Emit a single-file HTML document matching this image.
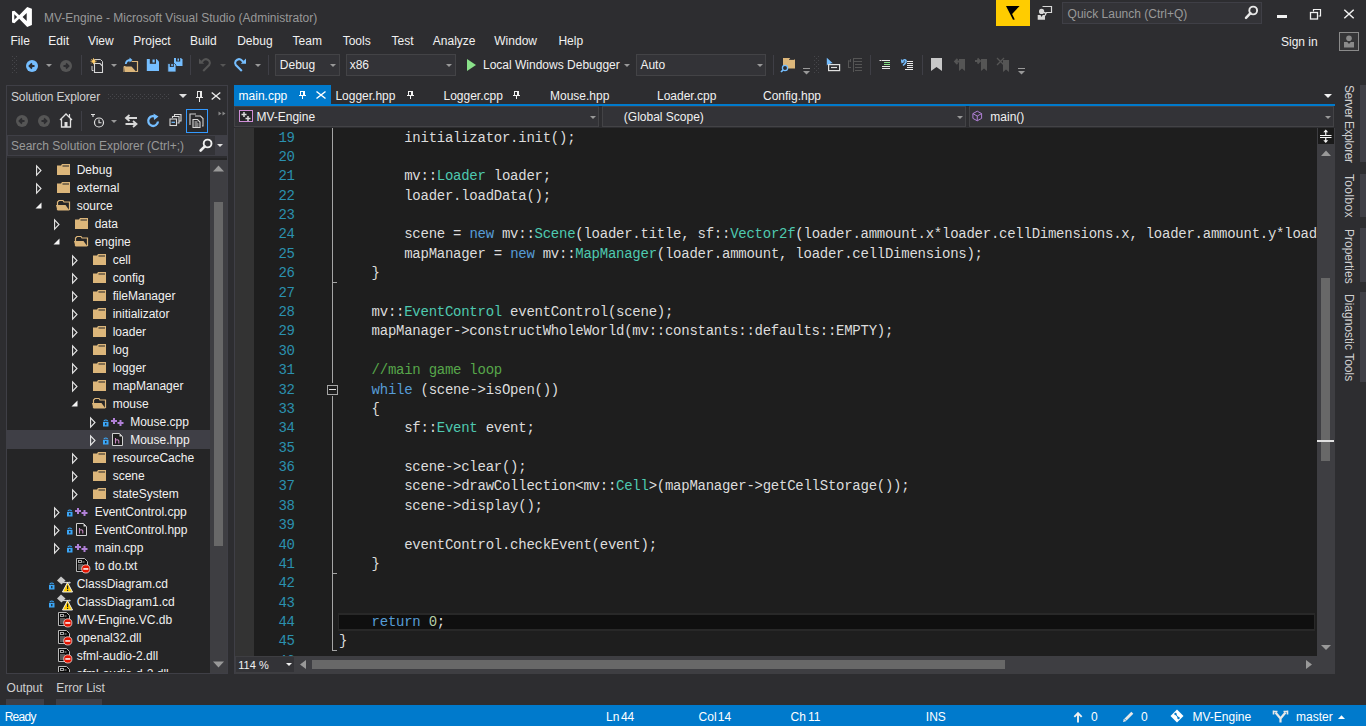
<!DOCTYPE html>
<html><head><meta charset="utf-8"><title>MV-Engine - Microsoft Visual Studio</title>
<style>
html,body{margin:0;padding:0;}
body{width:1366px;height:726px;overflow:hidden;position:relative;background:#2d2d30;font-family:"Liberation Sans", sans-serif;}
.t{position:absolute;white-space:nowrap;line-height:16px;}
.r{position:absolute;}
.s{position:absolute;overflow:visible;}
.code{position:absolute;white-space:pre;font-family:"Liberation Mono", monospace;font-size:14px;letter-spacing:-0.253px;line-height:19.38px;}
</style></head><body>
<svg class="s" style="left:12px;top:7px;" width="20" height="20" viewBox="0 0 20 20"><path fill-rule="evenodd" fill="#fff" d="M0 4.3L2.4 3.8L7.2 8.2L15.2 0L19.9 1.8V18.1L15.2 20L7.2 11.8L2.4 16.2L0 15.6Z M2.3 7.2V12.8L5.1 10Z M14.7 6.1V13.9L10.6 10Z"/></svg>
<div class="t" style="left:44.00px;top:10.24px;font-size:12px;color:#999999;">MV-Engine - Microsoft Visual Studio (Administrator)</div>
<div class="r" style="left:996px;top:0px;width:34px;height:26px;background:#ffcc00;"></div>
<svg class="s" style="left:1005px;top:5px;" width="16" height="16" viewBox="0 0 16 16"><path d="M1 1H14.6L7.1 9L9.8 14.6L8 14.8Z" fill="#000"/></svg>
<svg class="s" style="left:1037px;top:5px;" width="16" height="16" viewBox="0 0 16 16"><path d="M5.5 1.5H14.5V7.5H9.5L8.5 9.5L8 7.5H7" fill="none" stroke="#d8d8d8" stroke-width="1.2"/><circle cx="4.6" cy="6.4" r="2.6" fill="#d8d8d8"/><path d="M0.7 10H3.5L4.6 12L5.7 10H8V14.8H0.7Z" fill="#d8d8d8"/></svg>
<div class="r" style="left:1062px;top:2px;width:200px;height:22px;background:#333337;box-sizing:border-box;border:1px solid #3f3f46;"></div>
<div class="t" style="left:1067.60px;top:6.24px;font-size:12px;color:#999999;">Quick Launch (Ctrl+Q)</div>
<svg class="s" style="left:1244px;top:4px;" width="15" height="16" viewBox="0 0 15 16"><circle cx="9.2" cy="6.5" r="3.9" fill="none" stroke="#e8e8e8" stroke-width="1.9"/><path d="M6.5 9.2L2 13.8" stroke="#e8e8e8" stroke-width="2.5" stroke-linecap="round"/></svg>
<div class="r" style="left:1277px;top:15px;width:10px;height:3px;background:#f1f1f1;"></div>
<svg class="s" style="left:1309px;top:8px;" width="13" height="13" viewBox="0 0 13 13"><path d="M4.5 3.5V1.5H11.5V8H9.5" fill="none" stroke="#f1f1f1" stroke-width="1.2"/><rect x="1.5" y="4.5" width="7" height="6.5" fill="none" stroke="#f1f1f1" stroke-width="1.3"/></svg>
<svg class="s" style="left:1343px;top:9px;" width="12" height="10" viewBox="0 0 12 10"><path d="M1.3 0.8L10.7 9.2M10.7 0.8L1.3 9.2" stroke="#f1f1f1" stroke-width="1.5"/></svg>
<div class="t" style="left:10.50px;top:32.94px;font-size:12px;color:#f1f1f1;">File</div>
<div class="t" style="left:48.30px;top:32.94px;font-size:12px;color:#f1f1f1;">Edit</div>
<div class="t" style="left:87.90px;top:32.94px;font-size:12px;color:#f1f1f1;">View</div>
<div class="t" style="left:133.30px;top:32.94px;font-size:12px;color:#f1f1f1;">Project</div>
<div class="t" style="left:190.00px;top:32.94px;font-size:12px;color:#f1f1f1;">Build</div>
<div class="t" style="left:237.20px;top:32.94px;font-size:12px;color:#f1f1f1;">Debug</div>
<div class="t" style="left:292.60px;top:32.94px;font-size:12px;color:#f1f1f1;">Team</div>
<div class="t" style="left:342.70px;top:32.94px;font-size:12px;color:#f1f1f1;">Tools</div>
<div class="t" style="left:391.50px;top:32.94px;font-size:12px;color:#f1f1f1;">Test</div>
<div class="t" style="left:432.80px;top:32.94px;font-size:12px;color:#f1f1f1;">Analyze</div>
<div class="t" style="left:494.30px;top:32.94px;font-size:12px;color:#f1f1f1;">Window</div>
<div class="t" style="left:558.40px;top:32.94px;font-size:12px;color:#f1f1f1;">Help</div>
<div class="t" style="left:1281.00px;top:33.84px;font-size:12px;color:#f1f1f1;">Sign in</div>
<svg class="s" style="left:1339px;top:32px;" width="20" height="19" viewBox="0 0 20 19"><rect x="0.5" y="0.5" width="19" height="18" fill="#353537" stroke="#8a8a8a" stroke-width="1"/><circle cx="10" cy="6.3" r="2.8" fill="#8a8a8a"/><path d="M5 10H8.3L10 12L11.7 10H15V15.6H5Z" fill="#8a8a8a"/></svg>
<svg class="s" style="left:12px;top:56px;" width="5" height="18" viewBox="0 0 5 18"><rect x="0" y="0" width="1" height="1" fill="#46464a"/><rect x="4" y="0" width="1" height="1" fill="#46464a"/><rect x="0" y="4" width="1" height="1" fill="#46464a"/><rect x="4" y="4" width="1" height="1" fill="#46464a"/><rect x="0" y="8" width="1" height="1" fill="#46464a"/><rect x="4" y="8" width="1" height="1" fill="#46464a"/><rect x="0" y="12" width="1" height="1" fill="#46464a"/><rect x="4" y="12" width="1" height="1" fill="#46464a"/><rect x="0" y="16" width="1" height="1" fill="#46464a"/><rect x="4" y="16" width="1" height="1" fill="#46464a"/><rect x="2" y="2" width="1" height="1" fill="#46464a"/><rect x="2" y="6" width="1" height="1" fill="#46464a"/><rect x="2" y="10" width="1" height="1" fill="#46464a"/><rect x="2" y="14" width="1" height="1" fill="#46464a"/></svg>
<svg class="s" style="left:26px;top:59.5px;" width="12" height="12" viewBox="0 0 12 12"><circle cx="6" cy="6" r="6" fill="#75beff"/><path d="M8.5 6H3.8M6 3.5L3.5 6L6 8.5" stroke="#2d2d30" stroke-width="1.8" fill="none"/></svg>
<svg class="s" style="left:46px;top:64px;" width="6" height="3" viewBox="0 0 6 3"><path d="M0 0H6L3.0 3Z" fill="#999999"/></svg>
<svg class="s" style="left:60px;top:59.5px;" width="12" height="12" viewBox="0 0 12 12"><circle cx="6" cy="6" r="6" fill="#555555"/><path d="M3.5 6H8.2M6 3.5L8.5 6L6 8.5" stroke="#2d2d30" stroke-width="1.8" fill="none"/></svg>
<div class="r" style="left:81px;top:55px;width:1px;height:20px;background:#3f3f46;"></div>
<svg class="s" style="left:89px;top:57px;" width="16" height="16" viewBox="0 0 16 16"><path d="M5.5 5.5V2.5H11.5L13.5 4.5V12" fill="none" stroke="#d0d0d0" stroke-width="1"/><path d="M5.5 6.5H11L13.5 9V15.5H5.5Z" fill="#2d2d30" stroke="#d8d8d8" stroke-width="1.1"/><path d="M3 9V13.5H4.5" fill="none" stroke="#d0d0d0" stroke-width="1"/><circle cx="4.5" cy="4.2" r="1.3" fill="#ffcc66"/><path d="M1.5 4.2H7.5M4.5 1.2V7.2M2.4 2.1L6.6 6.3M6.6 2.1L2.4 6.3" stroke="#ffcc66" stroke-width="0.9"/></svg>
<svg class="s" style="left:111px;top:64px;" width="6" height="3" viewBox="0 0 6 3"><path d="M0 0H6L3.0 3Z" fill="#999999"/></svg>
<svg class="s" style="left:123px;top:57px;" width="16" height="16" viewBox="0 0 16 16"><path d="M8.5 4.5H14.5V14.5H13" fill="none" stroke="#dcb67a" stroke-width="1.2"/><path d="M1 9.5H8.5L13.5 15H2Z" fill="#dcb67a"/><path d="M2.5 9.5L1 9.5V15" fill="none" stroke="#dcb67a" stroke-width="1"/><path d="M2.8 7Q3 3 8 3" fill="none" stroke="#75beff" stroke-width="1.8"/><path d="M6.5 0.5L9.5 3L6.5 5.5Z" fill="#75beff"/></svg>
<svg class="s" style="left:146px;top:58px;" width="14" height="14" viewBox="0 0 14 14"><path d="M0.8 1H10.5L13 3.5V13H0.8Z" fill="#75beff"/><rect x="3.8" y="1" width="6.2" height="4.8" fill="#2d2d30"/><rect x="6.5" y="1.5" width="2.2" height="3" fill="#75beff"/></svg>
<svg class="s" style="left:167px;top:57px;" width="16" height="16" viewBox="0 0 16 16"><path d="M7 1H14L15.5 2.5V9H7Z" fill="#75beff"/><rect x="9" y="1" width="4.2" height="3.5" fill="#2d2d30"/><rect x="10.5" y="1.5" width="1.5" height="2.2" fill="#75beff"/><path d="M0.8 6.5H7.5L9 8V15H0.8Z" fill="#75beff" stroke="#2d2d30" stroke-width="0.8"/><rect x="2.8" y="6.5" width="4" height="3.5" fill="#2d2d30"/><rect x="4.3" y="7" width="1.5" height="2.2" fill="#75beff"/></svg>
<div class="r" style="left:190px;top:55px;width:1px;height:20px;background:#3f3f46;"></div>
<svg class="s" style="left:197px;top:57px;" width="15" height="16" viewBox="0 0 15 16"><path d="M6.2 14L12.2 8Q13.6 6.2 12.4 4.2Q10.2 1.2 7.2 2.6L4.8 4.8" fill="none" stroke="#555" stroke-width="2.1"/><path d="M2 1.4V6.7H7.2Z" fill="#555"/></svg>
<svg class="s" style="left:220px;top:64px;" width="6" height="3" viewBox="0 0 6 3"><path d="M0 0H6L3.0 3Z" fill="#555"/></svg>
<svg class="s" style="left:233px;top:57px;" width="15" height="16" viewBox="0 0 15 16"><path d="M8.8 14L2.8 8Q1.4 6.2 2.6 4.2Q4.8 1.2 7.8 2.6L10.2 4.8" fill="none" stroke="#75beff" stroke-width="2.1"/><path d="M13 1.4V6.7H7.8Z" fill="#75beff"/></svg>
<svg class="s" style="left:255px;top:64px;" width="6" height="3" viewBox="0 0 6 3"><path d="M0 0H6L3.0 3Z" fill="#999999"/></svg>
<div class="r" style="left:268px;top:55px;width:1px;height:20px;background:#3f3f46;"></div>
<div class="r" style="left:275px;top:54px;width:65px;height:22px;background:#333337;box-sizing:border-box;border:1px solid #434346;"></div>
<div class="t" style="left:279.80px;top:57.34px;font-size:12px;color:#f1f1f1;">Debug</div>
<svg class="s" style="left:330px;top:63.5px;" width="6" height="3" viewBox="0 0 6 3"><path d="M0 0H6L3.0 3Z" fill="#999999"/></svg>
<div class="r" style="left:346px;top:54px;width:110px;height:22px;background:#333337;box-sizing:border-box;border:1px solid #434346;"></div>
<div class="t" style="left:349.70px;top:57.34px;font-size:12px;color:#f1f1f1;">x86</div>
<svg class="s" style="left:446px;top:63.5px;" width="6" height="3" viewBox="0 0 6 3"><path d="M0 0H6L3.0 3Z" fill="#999999"/></svg>
<svg class="s" style="left:467px;top:59px;" width="9" height="12" viewBox="0 0 9 12"><path d="M0 0L9 6L0 12Z" fill="#8ae28a"/></svg>
<div class="t" style="left:483.00px;top:57.34px;font-size:12px;color:#f1f1f1;">Local Windows Debugger</div>
<svg class="s" style="left:624px;top:64px;" width="6" height="3" viewBox="0 0 6 3"><path d="M0 0H6L3.0 3Z" fill="#999999"/></svg>
<div class="r" style="left:636px;top:54px;width:130px;height:22px;background:#333337;box-sizing:border-box;border:1px solid #434346;"></div>
<div class="t" style="left:640.40px;top:57.34px;font-size:12px;color:#f1f1f1;">Auto</div>
<svg class="s" style="left:757px;top:63.5px;" width="6" height="3" viewBox="0 0 6 3"><path d="M0 0H6L3.0 3Z" fill="#999999"/></svg>
<div class="r" style="left:773px;top:55px;width:1px;height:20px;background:#3f3f46;"></div>
<svg class="s" style="left:780px;top:57px;" width="16" height="16" viewBox="0 0 16 16"><path d="M3 1H9.5L10.5 2.5H15V11.5H3Z" fill="#dcb67a"/><path d="M9 2.5H14" stroke="#2d2d30" stroke-width="0.8"/><circle cx="5" cy="11" r="2.6" fill="#2d2d30" stroke="#75beff" stroke-width="1.3"/><path d="M3.2 12.8L1 15" stroke="#75beff" stroke-width="1.7"/></svg>
<svg class="s" style="left:803px;top:68px;" width="7" height="7" viewBox="0 0 7 7"><rect x="0" y="0" width="7" height="1" fill="#999"/><path d="M0 3H7L3.5 6.5Z" fill="#999"/></svg>
<svg class="s" style="left:814px;top:56px;" width="5" height="18" viewBox="0 0 5 18"><rect x="0" y="0" width="1" height="1" fill="#46464a"/><rect x="4" y="0" width="1" height="1" fill="#46464a"/><rect x="0" y="4" width="1" height="1" fill="#46464a"/><rect x="4" y="4" width="1" height="1" fill="#46464a"/><rect x="0" y="8" width="1" height="1" fill="#46464a"/><rect x="4" y="8" width="1" height="1" fill="#46464a"/><rect x="0" y="12" width="1" height="1" fill="#46464a"/><rect x="4" y="12" width="1" height="1" fill="#46464a"/><rect x="0" y="16" width="1" height="1" fill="#46464a"/><rect x="4" y="16" width="1" height="1" fill="#46464a"/><rect x="2" y="2" width="1" height="1" fill="#46464a"/><rect x="2" y="6" width="1" height="1" fill="#46464a"/><rect x="2" y="10" width="1" height="1" fill="#46464a"/><rect x="2" y="14" width="1" height="1" fill="#46464a"/></svg>
<svg class="s" style="left:826px;top:57px;" width="15" height="15" viewBox="0 0 15 15"><path d="M0.8 0.8V8.5L2.8 6.8L4.2 9.2L5.5 8.5L4.3 6.2H6.8Z" fill="#75beff"/><rect x="2.6" y="7.6" width="11" height="6" fill="#2d2d30" stroke="#e0e0e0" stroke-width="1.2"/><path d="M5 10.5H11" stroke="#e0e0e0" stroke-width="1.2"/></svg>
<svg class="s" style="left:847px;top:57px;" width="16" height="16" viewBox="0 0 16 16"><g fill="#555"><rect x="1" y="3.5" width="1" height="7"/><rect x="1" y="3.5" width="3" height="1"/><rect x="1" y="10" width="3" height="1"/><rect x="3" y="2" width="1" height="3"/><rect x="6" y="1" width="1" height="14"/><rect x="6" y="1" width="9" height="1"/><rect x="7" y="4" width="8" height="1"/><rect x="8" y="7" width="7" height="1"/><rect x="8" y="10" width="7" height="1"/><rect x="8" y="13" width="7" height="1"/></g></svg>
<div class="r" style="left:870px;top:55px;width:1px;height:20px;background:#3f3f46;"></div>
<svg class="s" style="left:879px;top:59px;" width="12" height="11" viewBox="0 0 12 11"><g fill="#e8e8e8"><rect x="0.5" y="1" width="2" height="1"/><rect x="3" y="1" width="8" height="1"/><rect x="3" y="7" width="8" height="1"/><rect x="3" y="9" width="8" height="1"/></g><g fill="#8ae28a"><rect x="5" y="3" width="6" height="1"/><rect x="5" y="5" width="6" height="1"/></g></svg>
<svg class="s" style="left:900px;top:58px;" width="14" height="13" viewBox="0 0 14 13"><g fill="#e8e8e8"><rect x="7" y="3" width="6" height="1"/><rect x="7" y="5" width="6" height="1"/><rect x="7" y="7" width="6" height="1"/><rect x="7" y="9" width="6" height="1"/><rect x="5" y="11" width="8" height="1"/></g><path d="M1.5 1.5L2 4.5L4.5 3.5" fill="none" stroke="#75beff" stroke-width="1.3"/><path d="M2 4Q3.5 1 5.5 2Q7.5 3.5 3 7.5" fill="none" stroke="#75beff" stroke-width="1.6"/></svg>
<div class="r" style="left:922px;top:55px;width:1px;height:20px;background:#3f3f46;"></div>
<svg class="s" style="left:931px;top:58px;" width="11" height="13" viewBox="0 0 11 13"><path d="M0 0H11V13L5.5 9L0 13Z" fill="#c8c8c8"/></svg>
<svg class="s" style="left:953px;top:57px;" width="14" height="15" viewBox="0 0 14 15"><path d="M6 2H12V14L9 11.5L6 14Z" fill="#555"/><path d="M7 4.5H2M4.5 2L2 4.5L4.5 7" stroke="#555" stroke-width="1.8" fill="none" stroke-linejoin="miter"/></svg>
<svg class="s" style="left:974px;top:57px;" width="14" height="15" viewBox="0 0 14 15"><path d="M7 2H13V14L10 11.5L7 14Z" fill="#555"/><path d="M1 4H6M3.5 1.5L6 4L3.5 6.5" stroke="#555" stroke-width="1.8" fill="none"/></svg>
<svg class="s" style="left:996px;top:57px;" width="14" height="15" viewBox="0 0 14 15"><path d="M7 3H13V15L10 12.5L7 15Z" fill="#555"/><path d="M1 1L8 8M8 1L1 8" stroke="#555" stroke-width="1.3" fill="none"/></svg>
<svg class="s" style="left:1018px;top:68px;" width="7" height="7" viewBox="0 0 7 7"><rect x="0" y="0" width="7" height="1" fill="#999"/><path d="M0 3H7L3.5 6.5Z" fill="#999"/></svg>
<div class="r" style="left:6px;top:85px;width:222px;height:589px;background:#2d2d30;box-sizing:border-box;border:1px solid #3f3f46;"></div>
<div class="t" style="left:11.00px;top:88.54px;font-size:12px;color:#d0d0d0;letter-spacing:-0.14px;">Solution Explorer</div>
<svg class="s" style="left:108px;top:94px;" width="62" height="5" viewBox="0 0 62 5"><rect x="0" y="0" width="1" height="1" fill="#46464a"/><rect x="0" y="4" width="1" height="1" fill="#46464a"/><rect x="4" y="0" width="1" height="1" fill="#46464a"/><rect x="4" y="4" width="1" height="1" fill="#46464a"/><rect x="8" y="0" width="1" height="1" fill="#46464a"/><rect x="8" y="4" width="1" height="1" fill="#46464a"/><rect x="12" y="0" width="1" height="1" fill="#46464a"/><rect x="12" y="4" width="1" height="1" fill="#46464a"/><rect x="16" y="0" width="1" height="1" fill="#46464a"/><rect x="16" y="4" width="1" height="1" fill="#46464a"/><rect x="20" y="0" width="1" height="1" fill="#46464a"/><rect x="20" y="4" width="1" height="1" fill="#46464a"/><rect x="24" y="0" width="1" height="1" fill="#46464a"/><rect x="24" y="4" width="1" height="1" fill="#46464a"/><rect x="28" y="0" width="1" height="1" fill="#46464a"/><rect x="28" y="4" width="1" height="1" fill="#46464a"/><rect x="32" y="0" width="1" height="1" fill="#46464a"/><rect x="32" y="4" width="1" height="1" fill="#46464a"/><rect x="36" y="0" width="1" height="1" fill="#46464a"/><rect x="36" y="4" width="1" height="1" fill="#46464a"/><rect x="40" y="0" width="1" height="1" fill="#46464a"/><rect x="40" y="4" width="1" height="1" fill="#46464a"/><rect x="44" y="0" width="1" height="1" fill="#46464a"/><rect x="44" y="4" width="1" height="1" fill="#46464a"/><rect x="48" y="0" width="1" height="1" fill="#46464a"/><rect x="48" y="4" width="1" height="1" fill="#46464a"/><rect x="52" y="0" width="1" height="1" fill="#46464a"/><rect x="52" y="4" width="1" height="1" fill="#46464a"/><rect x="56" y="0" width="1" height="1" fill="#46464a"/><rect x="56" y="4" width="1" height="1" fill="#46464a"/><rect x="60" y="0" width="1" height="1" fill="#46464a"/><rect x="60" y="4" width="1" height="1" fill="#46464a"/><rect x="2" y="2" width="1" height="1" fill="#46464a"/><rect x="6" y="2" width="1" height="1" fill="#46464a"/><rect x="10" y="2" width="1" height="1" fill="#46464a"/><rect x="14" y="2" width="1" height="1" fill="#46464a"/><rect x="18" y="2" width="1" height="1" fill="#46464a"/><rect x="22" y="2" width="1" height="1" fill="#46464a"/><rect x="26" y="2" width="1" height="1" fill="#46464a"/><rect x="30" y="2" width="1" height="1" fill="#46464a"/><rect x="34" y="2" width="1" height="1" fill="#46464a"/><rect x="38" y="2" width="1" height="1" fill="#46464a"/><rect x="42" y="2" width="1" height="1" fill="#46464a"/><rect x="46" y="2" width="1" height="1" fill="#46464a"/><rect x="50" y="2" width="1" height="1" fill="#46464a"/><rect x="54" y="2" width="1" height="1" fill="#46464a"/><rect x="58" y="2" width="1" height="1" fill="#46464a"/></svg>
<svg class="s" style="left:179px;top:94px;" width="8" height="4" viewBox="0 0 8 4"><path d="M0 0H8L4 4Z" fill="#e0e0e0"/></svg>
<svg class="s" style="left:196px;top:91px;" width="8" height="11" viewBox="0 0 8 11"><g fill="#e8e8e8"><rect x="1" y="0" width="5" height="1"/><rect x="1" y="0" width="1" height="6"/><rect x="4" y="0" width="2" height="6"/><rect x="0" y="6" width="7" height="1"/><rect x="3" y="7" width="1" height="4"/></g></svg>
<svg class="s" style="left:211px;top:92px;" width="10" height="8" viewBox="0 0 10 8"><path d="M0.7 0.5L9.3 7.5M9.3 0.5L0.7 7.5" stroke="#e8e8e8" stroke-width="1.4"/></svg>
<svg class="s" style="left:16px;top:115px;" width="12" height="12" viewBox="0 0 12 12"><circle cx="6" cy="6" r="6" fill="#555555"/><path d="M8.5 6H3.8M6 3.5L3.5 6L6 8.5" stroke="#2d2d30" stroke-width="1.8" fill="none"/></svg>
<svg class="s" style="left:38px;top:115px;" width="12" height="12" viewBox="0 0 12 12"><circle cx="6" cy="6" r="6" fill="#555555"/><path d="M3.5 6H8.2M6 3.5L8.5 6L6 8.5" stroke="#2d2d30" stroke-width="1.8" fill="none"/></svg>
<svg class="s" style="left:59px;top:113px;" width="14" height="15" viewBox="0 0 14 15"><path d="M1 7L7 1L13 7" fill="none" stroke="#e0e0e0" stroke-width="1.3"/><path d="M2.5 6V14H11.5V6" fill="none" stroke="#e0e0e0" stroke-width="1.3"/><rect x="5.5" y="9" width="3" height="5" fill="#e0e0e0"/><path d="M10.5 1V4" stroke="#e0e0e0" stroke-width="1.2"/></svg>
<div class="r" style="left:81px;top:111px;width:1px;height:20px;background:#3f3f46;"></div>
<svg class="s" style="left:91px;top:114px;" width="14" height="14" viewBox="0 0 14 14"><path d="M0 0.5H4M2 0.5V3" stroke="#e0e0e0" stroke-width="1.2"/><circle cx="8" cy="8.5" r="4.5" fill="none" stroke="#e0e0e0" stroke-width="1.2"/><path d="M8 5.5V8.8H10.5" stroke="#e0e0e0" stroke-width="1.1" fill="none"/></svg>
<svg class="s" style="left:111px;top:120px;" width="6" height="3" viewBox="0 0 6 3"><path d="M0 0H6L3.0 3Z" fill="#999999"/></svg>
<svg class="s" style="left:124px;top:114px;" width="14" height="13" viewBox="0 0 14 13"><path d="M13 4H2.5M5.5 1L2 4L5.5 7M1.5 10H12M9 7L12.5 10L9 13" stroke="#d8d8d8" stroke-width="1.8" fill="none"/></svg>
<svg class="s" style="left:147px;top:113px;" width="13" height="15" viewBox="0 0 13 15"><path d="M9.6 4.6A4.9 4.9 0 1 0 11 8.5" fill="none" stroke="#75beff" stroke-width="2.3"/><path d="M6.5 0.5L11.5 3.5L7 7Z" fill="#75beff"/></svg>
<svg class="s" style="left:169px;top:114px;" width="13" height="13" viewBox="0 0 13 13"><rect x="1" y="5" width="6.5" height="6.5" fill="none" stroke="#d8d8d8" stroke-width="1.1"/><path d="M3.5 4V2.5H10V9H8.5M5.5 2V0.5H12V7H10.5" fill="none" stroke="#d8d8d8" stroke-width="1.1"/><path d="M2.5 8.3H6" stroke="#75beff" stroke-width="1.2"/></svg>
<div class="r" style="left:186px;top:109px;width:22px;height:24px;background:#29292b;box-sizing:border-box;border:1px solid #3399ff;"></div>
<svg class="s" style="left:189px;top:113px;" width="16" height="16" viewBox="0 0 16 16"><path d="M1.5 11.5H1V1H7" fill="none" stroke="#d0d0d0" stroke-width="1.1"/><path d="M6 3H11.5L14 5.5V13H13" fill="none" stroke="#d0d0d0" stroke-width="1.1"/><path d="M4 6.5H8.5L11 9V14.5H4Z" fill="#29292b" stroke="#d8d8d8" stroke-width="1.1"/><path d="M5.5 9H8.5M5.5 11H9.5M5.5 13H9.5" stroke="#d8d8d8" stroke-width="1"/></svg>
<svg class="s" style="left:218px;top:111px;" width="8" height="5" viewBox="0 0 8 5"><path d="M0.5 0.5L3.5 2.5L0.5 4.5ZM4.5 0.5L7.5 2.5L4.5 4.5Z" fill="#888"/></svg>
<div class="r" style="left:7px;top:135px;width:220px;height:21px;background:#333337;box-sizing:border-box;border:1px solid #3f3f46;"></div>
<div class="r" style="left:215px;top:136px;width:12px;height:19px;background:#3f3f46;"></div>
<div class="t" style="left:11.00px;top:137.84px;font-size:12px;color:#999999;">Search Solution Explorer (Ctrl+;)</div>
<svg class="s" style="left:199px;top:138px;" width="14" height="14" viewBox="0 0 14 14"><circle cx="8.6" cy="5.5" r="3.9" fill="none" stroke="#f0f0f0" stroke-width="1.9"/><path d="M5.8 8.3L1.6 12.5" stroke="#f0f0f0" stroke-width="2.6" stroke-linecap="round"/></svg>
<svg class="s" style="left:217px;top:144px;" width="6" height="3" viewBox="0 0 6 3"><path d="M0 0H6L3 3Z" fill="#e0e0e0"/></svg>
<div class="r" style="left:7px;top:158px;width:220px;height:515px;background:#252526;"></div>
<div class="r" style="left:7px;top:158px;width:203px;height:514px;overflow:hidden">
<svg class="s" style="left:29px;top:6.599999999999994px" width="6" height="11" viewBox="0 0 6 11"><path d="M0.6 0.8L5 5.5L0.6 10.2Z" fill="none" stroke="#e8e8e8" stroke-width="1.1"/></svg>
<svg class="s" style="left:50px;top:6.400000000000006px" width="13" height="11" viewBox="0 0 13 11"><path d="M0 1.5H4L5 0H13V11H0Z" fill="#dcb67a"/><path d="M5.5 2H12" stroke="#252526" stroke-width="1"/></svg>
<div class="t" style="left:69.70px;top:3.74px;font-size:12px;color:#f1f1f1">Debug</div>
<svg class="s" style="left:29px;top:24.599999999999994px" width="6" height="11" viewBox="0 0 6 11"><path d="M0.6 0.8L5 5.5L0.6 10.2Z" fill="none" stroke="#e8e8e8" stroke-width="1.1"/></svg>
<svg class="s" style="left:50px;top:24.400000000000006px" width="13" height="11" viewBox="0 0 13 11"><path d="M0 1.5H4L5 0H13V11H0Z" fill="#dcb67a"/><path d="M5.5 2H12" stroke="#252526" stroke-width="1"/></svg>
<div class="t" style="left:69.70px;top:21.74px;font-size:12px;color:#f1f1f1">external</div>
<svg class="s" style="left:28px;top:44.400000000000006px" width="7" height="7" viewBox="0 0 7 7"><path d="M6.5 0.5V6.5H0.5Z" fill="#f4f4f4"/></svg>
<svg class="s" style="left:49px;top:41.400000000000006px" width="15" height="12" viewBox="0 0 15 12"><path d="M1.5 11V3L3 1.5H7L8 3H13.5V11" fill="none" stroke="#dcb67a" stroke-width="1.2"/><path d="M0 6H9.5L13.5 11.5H1.5Z" fill="#dcb67a"/></svg>
<div class="t" style="left:69.70px;top:39.74px;font-size:12px;color:#f1f1f1">source</div>
<svg class="s" style="left:47px;top:60.599999999999994px" width="6" height="11" viewBox="0 0 6 11"><path d="M0.6 0.8L5 5.5L0.6 10.2Z" fill="none" stroke="#e8e8e8" stroke-width="1.1"/></svg>
<svg class="s" style="left:68px;top:60.400000000000006px" width="13" height="11" viewBox="0 0 13 11"><path d="M0 1.5H4L5 0H13V11H0Z" fill="#dcb67a"/><path d="M5.5 2H12" stroke="#252526" stroke-width="1"/></svg>
<div class="t" style="left:87.70px;top:57.74px;font-size:12px;color:#f1f1f1">data</div>
<svg class="s" style="left:46px;top:80.4px" width="7" height="7" viewBox="0 0 7 7"><path d="M6.5 0.5V6.5H0.5Z" fill="#f4f4f4"/></svg>
<svg class="s" style="left:67px;top:77.4px" width="15" height="12" viewBox="0 0 15 12"><path d="M1.5 11V3L3 1.5H7L8 3H13.5V11" fill="none" stroke="#dcb67a" stroke-width="1.2"/><path d="M0 6H9.5L13.5 11.5H1.5Z" fill="#dcb67a"/></svg>
<div class="t" style="left:87.70px;top:75.74px;font-size:12px;color:#f1f1f1">engine</div>
<svg class="s" style="left:65px;top:96.59999999999997px" width="6" height="11" viewBox="0 0 6 11"><path d="M0.6 0.8L5 5.5L0.6 10.2Z" fill="none" stroke="#e8e8e8" stroke-width="1.1"/></svg>
<svg class="s" style="left:86px;top:96.39999999999998px" width="13" height="11" viewBox="0 0 13 11"><path d="M0 1.5H4L5 0H13V11H0Z" fill="#dcb67a"/><path d="M5.5 2H12" stroke="#252526" stroke-width="1"/></svg>
<div class="t" style="left:105.70px;top:93.74px;font-size:12px;color:#f1f1f1">cell</div>
<svg class="s" style="left:65px;top:114.59999999999997px" width="6" height="11" viewBox="0 0 6 11"><path d="M0.6 0.8L5 5.5L0.6 10.2Z" fill="none" stroke="#e8e8e8" stroke-width="1.1"/></svg>
<svg class="s" style="left:86px;top:114.39999999999998px" width="13" height="11" viewBox="0 0 13 11"><path d="M0 1.5H4L5 0H13V11H0Z" fill="#dcb67a"/><path d="M5.5 2H12" stroke="#252526" stroke-width="1"/></svg>
<div class="t" style="left:105.70px;top:111.74px;font-size:12px;color:#f1f1f1">config</div>
<svg class="s" style="left:65px;top:132.59999999999997px" width="6" height="11" viewBox="0 0 6 11"><path d="M0.6 0.8L5 5.5L0.6 10.2Z" fill="none" stroke="#e8e8e8" stroke-width="1.1"/></svg>
<svg class="s" style="left:86px;top:132.39999999999998px" width="13" height="11" viewBox="0 0 13 11"><path d="M0 1.5H4L5 0H13V11H0Z" fill="#dcb67a"/><path d="M5.5 2H12" stroke="#252526" stroke-width="1"/></svg>
<div class="t" style="left:105.70px;top:129.74px;font-size:12px;color:#f1f1f1">fileManager</div>
<svg class="s" style="left:65px;top:150.59999999999997px" width="6" height="11" viewBox="0 0 6 11"><path d="M0.6 0.8L5 5.5L0.6 10.2Z" fill="none" stroke="#e8e8e8" stroke-width="1.1"/></svg>
<svg class="s" style="left:86px;top:150.39999999999998px" width="13" height="11" viewBox="0 0 13 11"><path d="M0 1.5H4L5 0H13V11H0Z" fill="#dcb67a"/><path d="M5.5 2H12" stroke="#252526" stroke-width="1"/></svg>
<div class="t" style="left:105.70px;top:147.74px;font-size:12px;color:#f1f1f1">initializator</div>
<svg class="s" style="left:65px;top:168.59999999999997px" width="6" height="11" viewBox="0 0 6 11"><path d="M0.6 0.8L5 5.5L0.6 10.2Z" fill="none" stroke="#e8e8e8" stroke-width="1.1"/></svg>
<svg class="s" style="left:86px;top:168.39999999999998px" width="13" height="11" viewBox="0 0 13 11"><path d="M0 1.5H4L5 0H13V11H0Z" fill="#dcb67a"/><path d="M5.5 2H12" stroke="#252526" stroke-width="1"/></svg>
<div class="t" style="left:105.70px;top:165.74px;font-size:12px;color:#f1f1f1">loader</div>
<svg class="s" style="left:65px;top:186.59999999999997px" width="6" height="11" viewBox="0 0 6 11"><path d="M0.6 0.8L5 5.5L0.6 10.2Z" fill="none" stroke="#e8e8e8" stroke-width="1.1"/></svg>
<svg class="s" style="left:86px;top:186.39999999999998px" width="13" height="11" viewBox="0 0 13 11"><path d="M0 1.5H4L5 0H13V11H0Z" fill="#dcb67a"/><path d="M5.5 2H12" stroke="#252526" stroke-width="1"/></svg>
<div class="t" style="left:105.70px;top:183.74px;font-size:12px;color:#f1f1f1">log</div>
<svg class="s" style="left:65px;top:204.59999999999997px" width="6" height="11" viewBox="0 0 6 11"><path d="M0.6 0.8L5 5.5L0.6 10.2Z" fill="none" stroke="#e8e8e8" stroke-width="1.1"/></svg>
<svg class="s" style="left:86px;top:204.39999999999998px" width="13" height="11" viewBox="0 0 13 11"><path d="M0 1.5H4L5 0H13V11H0Z" fill="#dcb67a"/><path d="M5.5 2H12" stroke="#252526" stroke-width="1"/></svg>
<div class="t" style="left:105.70px;top:201.74px;font-size:12px;color:#f1f1f1">logger</div>
<svg class="s" style="left:65px;top:222.59999999999997px" width="6" height="11" viewBox="0 0 6 11"><path d="M0.6 0.8L5 5.5L0.6 10.2Z" fill="none" stroke="#e8e8e8" stroke-width="1.1"/></svg>
<svg class="s" style="left:86px;top:222.39999999999998px" width="13" height="11" viewBox="0 0 13 11"><path d="M0 1.5H4L5 0H13V11H0Z" fill="#dcb67a"/><path d="M5.5 2H12" stroke="#252526" stroke-width="1"/></svg>
<div class="t" style="left:105.70px;top:219.74px;font-size:12px;color:#f1f1f1">mapManager</div>
<svg class="s" style="left:64px;top:242.39999999999998px" width="7" height="7" viewBox="0 0 7 7"><path d="M6.5 0.5V6.5H0.5Z" fill="#f4f4f4"/></svg>
<svg class="s" style="left:85px;top:239.39999999999998px" width="15" height="12" viewBox="0 0 15 12"><path d="M1.5 11V3L3 1.5H7L8 3H13.5V11" fill="none" stroke="#dcb67a" stroke-width="1.2"/><path d="M0 6H9.5L13.5 11.5H1.5Z" fill="#dcb67a"/></svg>
<div class="t" style="left:105.70px;top:237.74px;font-size:12px;color:#f1f1f1">mouse</div>
<svg class="s" style="left:83px;top:258.59999999999997px" width="6" height="11" viewBox="0 0 6 11"><path d="M0.6 0.8L5 5.5L0.6 10.2Z" fill="none" stroke="#e8e8e8" stroke-width="1.1"/></svg>
<svg class="s" style="left:104px;top:259.4px" width="13" height="10" viewBox="0 0 13 10"><path d="M0 4H6M3 1V7M6.5 6H12.5M9.5 3V9" stroke="#b180d7" stroke-width="2"/></svg>
<svg class="s" style="left:95.5px;top:260.59999999999997px" width="6" height="8" viewBox="0 0 6 8"><path d="M0.8 1.9Q2.75 0.1 4.7 1.9" fill="none" stroke="#3ba6f7" stroke-width="1.1"/><rect x="0" y="2.8" width="5.5" height="4.7" fill="#3ba6f7"/><rect x="2.2" y="4" width="1.2" height="2.2" fill="#1e1e1e"/></svg>
<div class="t" style="left:123.20px;top:255.74px;font-size:12px;color:#f1f1f1">Mouse.cpp</div>
<div class="r" style="left:0px;top:272px;width:204px;height:19px;background:#3f3f46"></div>
<svg class="s" style="left:83px;top:276.59999999999997px" width="6" height="11" viewBox="0 0 6 11"><path d="M0.6 0.8L5 5.5L0.6 10.2Z" fill="none" stroke="#e8e8e8" stroke-width="1.1"/></svg>
<svg class="s" style="left:104.5px;top:274.9px" width="12" height="14" viewBox="0 0 12 14"><path d="M0.5 0.5H7.5L10.5 3.5V12.5H0.5Z" fill="#1e1e1e" stroke="#d0d0d0" stroke-width="1"/><path d="M7.5 0.5V3.5H10.5Z" fill="#d0d0d0"/><path d="M3.5 5V10.5M3.5 7.5Q3.5 6.8 5.2 6.8Q6.8 6.8 6.8 7.8V10.5" fill="none" stroke="#c586c0" stroke-width="1.1"/></svg>
<svg class="s" style="left:95.5px;top:278.59999999999997px" width="6" height="8" viewBox="0 0 6 8"><path d="M0.8 1.9Q2.75 0.1 4.7 1.9" fill="none" stroke="#3ba6f7" stroke-width="1.1"/><rect x="0" y="2.8" width="5.5" height="4.7" fill="#3ba6f7"/><rect x="2.2" y="4" width="1.2" height="2.2" fill="#1e1e1e"/></svg>
<div class="t" style="left:123.20px;top:273.74px;font-size:12px;color:#f1f1f1">Mouse.hpp</div>
<svg class="s" style="left:65px;top:294.59999999999997px" width="6" height="11" viewBox="0 0 6 11"><path d="M0.6 0.8L5 5.5L0.6 10.2Z" fill="none" stroke="#e8e8e8" stroke-width="1.1"/></svg>
<svg class="s" style="left:86px;top:294.4px" width="13" height="11" viewBox="0 0 13 11"><path d="M0 1.5H4L5 0H13V11H0Z" fill="#dcb67a"/><path d="M5.5 2H12" stroke="#252526" stroke-width="1"/></svg>
<div class="t" style="left:105.70px;top:291.74px;font-size:12px;color:#f1f1f1">resourceCache</div>
<svg class="s" style="left:65px;top:312.59999999999997px" width="6" height="11" viewBox="0 0 6 11"><path d="M0.6 0.8L5 5.5L0.6 10.2Z" fill="none" stroke="#e8e8e8" stroke-width="1.1"/></svg>
<svg class="s" style="left:86px;top:312.4px" width="13" height="11" viewBox="0 0 13 11"><path d="M0 1.5H4L5 0H13V11H0Z" fill="#dcb67a"/><path d="M5.5 2H12" stroke="#252526" stroke-width="1"/></svg>
<div class="t" style="left:105.70px;top:309.74px;font-size:12px;color:#f1f1f1">scene</div>
<svg class="s" style="left:65px;top:330.59999999999997px" width="6" height="11" viewBox="0 0 6 11"><path d="M0.6 0.8L5 5.5L0.6 10.2Z" fill="none" stroke="#e8e8e8" stroke-width="1.1"/></svg>
<svg class="s" style="left:86px;top:330.4px" width="13" height="11" viewBox="0 0 13 11"><path d="M0 1.5H4L5 0H13V11H0Z" fill="#dcb67a"/><path d="M5.5 2H12" stroke="#252526" stroke-width="1"/></svg>
<div class="t" style="left:105.70px;top:327.74px;font-size:12px;color:#f1f1f1">stateSystem</div>
<svg class="s" style="left:47px;top:348.59999999999997px" width="6" height="11" viewBox="0 0 6 11"><path d="M0.6 0.8L5 5.5L0.6 10.2Z" fill="none" stroke="#e8e8e8" stroke-width="1.1"/></svg>
<svg class="s" style="left:68px;top:349.4px" width="13" height="10" viewBox="0 0 13 10"><path d="M0 4H6M3 1V7M6.5 6H12.5M9.5 3V9" stroke="#b180d7" stroke-width="2"/></svg>
<svg class="s" style="left:59.5px;top:350.59999999999997px" width="6" height="8" viewBox="0 0 6 8"><path d="M0.8 1.9Q2.75 0.1 4.7 1.9" fill="none" stroke="#3ba6f7" stroke-width="1.1"/><rect x="0" y="2.8" width="5.5" height="4.7" fill="#3ba6f7"/><rect x="2.2" y="4" width="1.2" height="2.2" fill="#1e1e1e"/></svg>
<div class="t" style="left:87.70px;top:345.74px;font-size:12px;color:#f1f1f1">EventControl.cpp</div>
<svg class="s" style="left:47px;top:366.6px" width="6" height="11" viewBox="0 0 6 11"><path d="M0.6 0.8L5 5.5L0.6 10.2Z" fill="none" stroke="#e8e8e8" stroke-width="1.1"/></svg>
<svg class="s" style="left:68.5px;top:364.9px" width="12" height="14" viewBox="0 0 12 14"><path d="M0.5 0.5H7.5L10.5 3.5V12.5H0.5Z" fill="#1e1e1e" stroke="#d0d0d0" stroke-width="1"/><path d="M7.5 0.5V3.5H10.5Z" fill="#d0d0d0"/><path d="M3.5 5V10.5M3.5 7.5Q3.5 6.8 5.2 6.8Q6.8 6.8 6.8 7.8V10.5" fill="none" stroke="#c586c0" stroke-width="1.1"/></svg>
<svg class="s" style="left:59.5px;top:368.6px" width="6" height="8" viewBox="0 0 6 8"><path d="M0.8 1.9Q2.75 0.1 4.7 1.9" fill="none" stroke="#3ba6f7" stroke-width="1.1"/><rect x="0" y="2.8" width="5.5" height="4.7" fill="#3ba6f7"/><rect x="2.2" y="4" width="1.2" height="2.2" fill="#1e1e1e"/></svg>
<div class="t" style="left:87.70px;top:363.74px;font-size:12px;color:#f1f1f1">EventControl.hpp</div>
<svg class="s" style="left:47px;top:384.6px" width="6" height="11" viewBox="0 0 6 11"><path d="M0.6 0.8L5 5.5L0.6 10.2Z" fill="none" stroke="#e8e8e8" stroke-width="1.1"/></svg>
<svg class="s" style="left:68px;top:385.4px" width="13" height="10" viewBox="0 0 13 10"><path d="M0 4H6M3 1V7M6.5 6H12.5M9.5 3V9" stroke="#b180d7" stroke-width="2"/></svg>
<svg class="s" style="left:59.5px;top:386.6px" width="6" height="8" viewBox="0 0 6 8"><path d="M0.8 1.9Q2.75 0.1 4.7 1.9" fill="none" stroke="#3ba6f7" stroke-width="1.1"/><rect x="0" y="2.8" width="5.5" height="4.7" fill="#3ba6f7"/><rect x="2.2" y="4" width="1.2" height="2.2" fill="#1e1e1e"/></svg>
<div class="t" style="left:87.70px;top:381.74px;font-size:12px;color:#f1f1f1">main.cpp</div>
<svg class="s" style="left:69px;top:400.4px" width="15" height="16" viewBox="0 0 15 16"><path d="M0.5 0.5H8.5L11.5 3.5V13.5H0.5Z" fill="#0a0a0a" stroke="#b8b8b8" stroke-width="1"/><rect x="2.5" y="2.5" width="3" height="2" fill="none" stroke="#b8b8b8" stroke-width="0.9"/><path d="M6.5 4H8.5M2 7H7M2 9H6M2 11H6" stroke="#b8b8b8" stroke-width="0.9"/><circle cx="9.8" cy="10.9" r="4.1" fill="#e51400" stroke="#f4f4f4" stroke-width="0.7"/><rect x="7.3" y="10.2" width="5" height="1.5" fill="#fff"/></svg>
<div class="t" style="left:87.70px;top:399.74px;font-size:12px;color:#f1f1f1">to do.txt</div>
<svg class="s" style="left:49px;top:416.9px" width="17" height="18" viewBox="0 0 17 18"><path d="M1 5.5L5 1.5L9.5 5.5L5.5 9.5Z" fill="#c8c8c8"/><path d="M7 7.5H14" stroke="#c8c8c8" stroke-width="1.2"/><path d="M13 6.5L15 7.5L13.5 9" fill="#c8c8c8"/><path d="M11.5 7.5L16.5 17H6.5Z" fill="#ffcc00" stroke="#f0f0f0" stroke-width="1"/><rect x="11" y="10.5" width="1.2" height="3.5" fill="#1e1e1e"/><rect x="11" y="14.8" width="1.2" height="1.2" fill="#1e1e1e"/></svg>
<svg class="s" style="left:41.5px;top:423.8px" width="6" height="8" viewBox="0 0 6 8"><path d="M0.8 1.9Q2.75 0.1 4.7 1.9" fill="none" stroke="#3ba6f7" stroke-width="1.1"/><rect x="0" y="2.8" width="5.5" height="4.7" fill="#3ba6f7"/><rect x="2.2" y="4" width="1.2" height="2.2" fill="#1e1e1e"/></svg>
<div class="t" style="left:69.70px;top:417.74px;font-size:12px;color:#f1f1f1">ClassDiagram.cd</div>
<svg class="s" style="left:49px;top:434.9px" width="17" height="18" viewBox="0 0 17 18"><path d="M1 5.5L5 1.5L9.5 5.5L5.5 9.5Z" fill="#c8c8c8"/><path d="M7 7.5H14" stroke="#c8c8c8" stroke-width="1.2"/><path d="M13 6.5L15 7.5L13.5 9" fill="#c8c8c8"/><path d="M11.5 7.5L16.5 17H6.5Z" fill="#ffcc00" stroke="#f0f0f0" stroke-width="1"/><rect x="11" y="10.5" width="1.2" height="3.5" fill="#1e1e1e"/><rect x="11" y="14.8" width="1.2" height="1.2" fill="#1e1e1e"/></svg>
<svg class="s" style="left:41.5px;top:441.8px" width="6" height="8" viewBox="0 0 6 8"><path d="M0.8 1.9Q2.75 0.1 4.7 1.9" fill="none" stroke="#3ba6f7" stroke-width="1.1"/><rect x="0" y="2.8" width="5.5" height="4.7" fill="#3ba6f7"/><rect x="2.2" y="4" width="1.2" height="2.2" fill="#1e1e1e"/></svg>
<div class="t" style="left:69.70px;top:435.74px;font-size:12px;color:#f1f1f1">ClassDiagram1.cd</div>
<svg class="s" style="left:51px;top:454.4px" width="15" height="16" viewBox="0 0 15 16"><path d="M0.5 0.5H8.5L11.5 3.5V13.5H0.5Z" fill="#0a0a0a" stroke="#b8b8b8" stroke-width="1"/><rect x="2.5" y="2.5" width="3" height="2" fill="none" stroke="#b8b8b8" stroke-width="0.9"/><path d="M6.5 4H8.5M2 7H7M2 9H6M2 11H6" stroke="#b8b8b8" stroke-width="0.9"/><circle cx="9.8" cy="10.9" r="4.1" fill="#e51400" stroke="#f4f4f4" stroke-width="0.7"/><rect x="7.3" y="10.2" width="5" height="1.5" fill="#fff"/></svg>
<div class="t" style="left:69.70px;top:453.74px;font-size:12px;color:#f1f1f1">MV-Engine.VC.db</div>
<svg class="s" style="left:51px;top:472.4px" width="15" height="16" viewBox="0 0 15 16"><path d="M0.5 0.5H8.5L11.5 3.5V13.5H0.5Z" fill="#0a0a0a" stroke="#b8b8b8" stroke-width="1"/><rect x="2.5" y="2.5" width="3" height="2" fill="none" stroke="#b8b8b8" stroke-width="0.9"/><path d="M6.5 4H8.5M2 7H7M2 9H6M2 11H6" stroke="#b8b8b8" stroke-width="0.9"/><circle cx="9.8" cy="10.9" r="4.1" fill="#e51400" stroke="#f4f4f4" stroke-width="0.7"/><rect x="7.3" y="10.2" width="5" height="1.5" fill="#fff"/></svg>
<div class="t" style="left:69.70px;top:471.74px;font-size:12px;color:#f1f1f1">openal32.dll</div>
<svg class="s" style="left:51px;top:490.4px" width="15" height="16" viewBox="0 0 15 16"><path d="M0.5 0.5H8.5L11.5 3.5V13.5H0.5Z" fill="#0a0a0a" stroke="#b8b8b8" stroke-width="1"/><rect x="2.5" y="2.5" width="3" height="2" fill="none" stroke="#b8b8b8" stroke-width="0.9"/><path d="M6.5 4H8.5M2 7H7M2 9H6M2 11H6" stroke="#b8b8b8" stroke-width="0.9"/><circle cx="9.8" cy="10.9" r="4.1" fill="#e51400" stroke="#f4f4f4" stroke-width="0.7"/><rect x="7.3" y="10.2" width="5" height="1.5" fill="#fff"/></svg>
<div class="t" style="left:69.70px;top:489.74px;font-size:12px;color:#f1f1f1">sfml-audio-2.dll</div>
<svg class="s" style="left:51px;top:508.4px" width="15" height="16" viewBox="0 0 15 16"><path d="M0.5 0.5H8.5L11.5 3.5V13.5H0.5Z" fill="#0a0a0a" stroke="#b8b8b8" stroke-width="1"/><rect x="2.5" y="2.5" width="3" height="2" fill="none" stroke="#b8b8b8" stroke-width="0.9"/><path d="M6.5 4H8.5M2 7H7M2 9H6M2 11H6" stroke="#b8b8b8" stroke-width="0.9"/><circle cx="9.8" cy="10.9" r="4.1" fill="#e51400" stroke="#f4f4f4" stroke-width="0.7"/><rect x="7.3" y="10.2" width="5" height="1.5" fill="#fff"/></svg>
<div class="t" style="left:69.70px;top:507.74px;font-size:12px;color:#f1f1f1">sfml-audio-d-2.dll</div>
</div>
<div class="r" style="left:210px;top:160px;width:17px;height:513px;background:#3e3e42;"></div>
<svg class="s" style="left:213px;top:165px;" width="11" height="7" viewBox="0 0 11 7"><path d="M0 6.5L5.5 0.5L11 6.5Z" fill="#999"/></svg>
<div class="r" style="left:214px;top:202px;width:9px;height:344px;background:#686868;"></div>
<svg class="s" style="left:213px;top:661px;" width="11" height="7" viewBox="0 0 11 7"><path d="M0 0.5L5.5 6.5L11 0.5Z" fill="#999"/></svg>
<div class="r" style="left:234px;top:85px;width:97px;height:21px;background:#007acc;"></div>
<div class="r" style="left:234px;top:104px;width:1101px;height:2px;background:#007acc;"></div>
<div class="t" style="left:238.60px;top:87.84px;font-size:12px;color:#ffffff;">main.cpp</div>
<svg class="s" style="left:299px;top:91px;" width="8" height="9" viewBox="0 0 8 9"><g fill="#ffffff"><rect x="1" y="0" width="5" height="1"/><rect x="1" y="0" width="1" height="4"/><rect x="4" y="0" width="2" height="4"/><rect x="0" y="4" width="7" height="1"/><rect x="3" y="5" width="1" height="3"/></g></svg>
<svg class="s" style="left:316px;top:91px;" width="10" height="8" viewBox="0 0 10 8"><path d="M0.5 0.5L9.5 7.5M9.5 0.5L0.5 7.5" stroke="#ffffff" stroke-width="1.5"/></svg>
<div class="t" style="left:335.40px;top:87.84px;font-size:12px;color:#f1f1f1;">Logger.hpp</div>
<svg class="s" style="left:407px;top:91px;" width="8" height="9" viewBox="0 0 8 9"><g fill="#f1f1f1"><rect x="1" y="0" width="5" height="1"/><rect x="1" y="0" width="1" height="4"/><rect x="4" y="0" width="2" height="4"/><rect x="0" y="4" width="7" height="1"/><rect x="3" y="5" width="1" height="3"/></g></svg>
<div class="t" style="left:443.50px;top:87.84px;font-size:12px;color:#f1f1f1;">Logger.cpp</div>
<svg class="s" style="left:513px;top:91px;" width="8" height="9" viewBox="0 0 8 9"><g fill="#f1f1f1"><rect x="1" y="0" width="5" height="1"/><rect x="1" y="0" width="1" height="4"/><rect x="4" y="0" width="2" height="4"/><rect x="0" y="4" width="7" height="1"/><rect x="3" y="5" width="1" height="3"/></g></svg>
<div class="t" style="left:550.00px;top:87.84px;font-size:12px;color:#f1f1f1;">Mouse.hpp</div>
<div class="t" style="left:657.00px;top:87.84px;font-size:12px;color:#f1f1f1;">Loader.cpp</div>
<div class="t" style="left:763.00px;top:87.84px;font-size:12px;color:#f1f1f1;">Config.hpp</div>
<svg class="s" style="left:1324px;top:94px;" width="8" height="4" viewBox="0 0 8 4"><path d="M0 0H8L4 4Z" fill="#f1f1f1"/></svg>
<div class="r" style="left:234px;top:106px;width:1101px;height:22px;background:#2d2d30;"></div>
<div class="r" style="left:234px;top:106px;width:365px;height:21px;background:#333337;box-sizing:border-box;border:1px solid #434346;"></div>
<svg class="s" style="left:590px;top:116.0px;" width="6" height="3" viewBox="0 0 6 3"><path d="M0 0H6L3.0 3Z" fill="#999999"/></svg>
<div class="r" style="left:602px;top:106px;width:364px;height:21px;background:#333337;box-sizing:border-box;border:1px solid #434346;"></div>
<svg class="s" style="left:957px;top:116.0px;" width="6" height="3" viewBox="0 0 6 3"><path d="M0 0H6L3.0 3Z" fill="#999999"/></svg>
<div class="r" style="left:969px;top:106px;width:365px;height:21px;background:#333337;box-sizing:border-box;border:1px solid #434346;"></div>
<svg class="s" style="left:1325px;top:116.0px;" width="6" height="3" viewBox="0 0 6 3"><path d="M0 0H6L3.0 3Z" fill="#999999"/></svg>
<svg class="s" style="left:239px;top:110px;" width="15" height="13" viewBox="0 0 15 13"><rect x="0.5" y="0.5" width="13" height="11" fill="#252527" stroke="#d08fd8" stroke-width="1"/><path d="M2.5 4.5H7.5M5 2V7M6.5 8.5H11.5M9 6V11" stroke="#dcdcdc" stroke-width="1.5"/></svg>
<div class="t" style="left:256.40px;top:108.94px;font-size:12px;color:#f1f1f1;">MV-Engine</div>
<div class="t" style="left:623.80px;top:108.84px;font-size:12px;color:#f1f1f1;">(Global Scope)</div>
<svg class="s" style="left:972px;top:110px;" width="11" height="12" viewBox="0 0 11 12"><path d="M5.25 1.2L9.6 3.6V8.4L5.25 10.8L0.9 8.4V3.6Z" fill="none" stroke="#b180d7" stroke-width="1"/><path d="M0.9 3.6L5.25 6L9.6 3.6M5.25 6V10.8" fill="none" stroke="#b180d7" stroke-width="1"/></svg>
<div class="t" style="left:990.30px;top:108.84px;font-size:12px;color:#f1f1f1;">main()</div>
<div class="r" style="left:234px;top:128px;width:1101px;height:546px;background:#3e3e42;"></div>
<div class="r" style="left:234px;top:128px;width:1px;height:546px;background:#3f3f46;"></div>
<div class="r" style="left:235px;top:128px;width:19px;height:528px;background:#333333;"></div>
<div class="r" style="left:254px;top:128px;width:1063px;height:528px;background:#1e1e1e;"></div>
<div class="r" style="left:338px;top:613px;width:977px;height:18px;background:#0f0f0f;box-sizing:border-box;border:1px solid #282828;border-top-width:2px;border-bottom-width:2px;"></div>
<div class="r" style="left:332px;top:128px;width:1px;height:255px;background:#a5a5a5;"></div>
<div class="r" style="left:332px;top:396px;width:1px;height:255px;background:#a5a5a5;"></div>
<div class="r" style="left:332px;top:282px;width:5px;height:1px;background:#a5a5a5;"></div>
<div class="r" style="left:332px;top:573px;width:5px;height:1px;background:#a5a5a5;"></div>
<div class="r" style="left:332px;top:650px;width:5px;height:1px;background:#a5a5a5;"></div>
<div class="r" style="left:327px;top:385px;width:11px;height:10px;background:transparent;box-sizing:border-box;border:1px solid #a5a5a5;"></div>
<div class="r" style="left:329px;top:389px;width:7px;height:1px;background:#e0e0e0;"></div>
<div class="r" style="left:254px;top:128px;width:1063px;height:528px;overflow:hidden">
<div class="code" style="left:24.399999999999977px;top:0.57px;width:16.29px;text-align:right;color:#2b91af">19</div>
<div class="code" style="left:85px;top:0.57px;color:#dcdcdc">        initializator.init();</div>
<div class="code" style="left:24.399999999999977px;top:19.95px;width:16.29px;text-align:right;color:#2b91af">20</div>
<div class="code" style="left:24.399999999999977px;top:39.33px;width:16.29px;text-align:right;color:#2b91af">21</div>
<div class="code" style="left:85px;top:39.33px;color:#dcdcdc">        mv::<span style="color:#4ec9b0">Loader</span> loader;</div>
<div class="code" style="left:24.399999999999977px;top:58.71px;width:16.29px;text-align:right;color:#2b91af">22</div>
<div class="code" style="left:85px;top:58.71px;color:#dcdcdc">        loader.loadData();</div>
<div class="code" style="left:24.399999999999977px;top:78.09px;width:16.29px;text-align:right;color:#2b91af">23</div>
<div class="code" style="left:24.399999999999977px;top:97.47px;width:16.29px;text-align:right;color:#2b91af">24</div>
<div class="code" style="left:85px;top:97.47px;color:#dcdcdc">        scene = <span style="color:#569cd6">new</span> mv::<span style="color:#4ec9b0">Scene</span>(loader.title, sf::<span style="color:#4ec9b0">Vector2f</span>(loader.ammount.x*loader.cellDimensions.x, loader.ammount.y*loader.cellDimensions.y));</div>
<div class="code" style="left:24.399999999999977px;top:116.85px;width:16.29px;text-align:right;color:#2b91af">25</div>
<div class="code" style="left:85px;top:116.85px;color:#dcdcdc">        mapManager = <span style="color:#569cd6">new</span> mv::<span style="color:#4ec9b0">MapManager</span>(loader.ammount, loader.cellDimensions);</div>
<div class="code" style="left:24.399999999999977px;top:136.23px;width:16.29px;text-align:right;color:#2b91af">26</div>
<div class="code" style="left:85px;top:136.23px;color:#dcdcdc">    }</div>
<div class="code" style="left:24.399999999999977px;top:155.61px;width:16.29px;text-align:right;color:#2b91af">27</div>
<div class="code" style="left:24.399999999999977px;top:174.99px;width:16.29px;text-align:right;color:#2b91af">28</div>
<div class="code" style="left:85px;top:174.99px;color:#dcdcdc">    mv::<span style="color:#4ec9b0">EventControl</span> eventControl(scene);</div>
<div class="code" style="left:24.399999999999977px;top:194.37px;width:16.29px;text-align:right;color:#2b91af">29</div>
<div class="code" style="left:85px;top:194.37px;color:#dcdcdc">    mapManager-&gt;constructWholeWorld(mv::constants::defaults::EMPTY);</div>
<div class="code" style="left:24.399999999999977px;top:213.75px;width:16.29px;text-align:right;color:#2b91af">30</div>
<div class="code" style="left:24.399999999999977px;top:233.13px;width:16.29px;text-align:right;color:#2b91af">31</div>
<div class="code" style="left:85px;top:233.13px;color:#dcdcdc"><span style="color:#57a64a">    //main game loop</span></div>
<div class="code" style="left:24.399999999999977px;top:252.51px;width:16.29px;text-align:right;color:#2b91af">32</div>
<div class="code" style="left:85px;top:252.51px;color:#dcdcdc">    <span style="color:#569cd6">while</span> (scene-&gt;isOpen())</div>
<div class="code" style="left:24.399999999999977px;top:271.89px;width:16.29px;text-align:right;color:#2b91af">33</div>
<div class="code" style="left:85px;top:271.89px;color:#dcdcdc">    {</div>
<div class="code" style="left:24.399999999999977px;top:291.27px;width:16.29px;text-align:right;color:#2b91af">34</div>
<div class="code" style="left:85px;top:291.27px;color:#dcdcdc">        sf::<span style="color:#4ec9b0">Event</span> event;</div>
<div class="code" style="left:24.399999999999977px;top:310.65px;width:16.29px;text-align:right;color:#2b91af">35</div>
<div class="code" style="left:24.399999999999977px;top:330.03px;width:16.29px;text-align:right;color:#2b91af">36</div>
<div class="code" style="left:85px;top:330.03px;color:#dcdcdc">        scene-&gt;clear();</div>
<div class="code" style="left:24.399999999999977px;top:349.41px;width:16.29px;text-align:right;color:#2b91af">37</div>
<div class="code" style="left:85px;top:349.41px;color:#dcdcdc">        scene-&gt;drawCollection&lt;mv::<span style="color:#4ec9b0">Cell</span>&gt;(mapManager-&gt;getCellStorage());</div>
<div class="code" style="left:24.399999999999977px;top:368.79px;width:16.29px;text-align:right;color:#2b91af">38</div>
<div class="code" style="left:85px;top:368.79px;color:#dcdcdc">        scene-&gt;display();</div>
<div class="code" style="left:24.399999999999977px;top:388.17px;width:16.29px;text-align:right;color:#2b91af">39</div>
<div class="code" style="left:24.399999999999977px;top:407.55px;width:16.29px;text-align:right;color:#2b91af">40</div>
<div class="code" style="left:85px;top:407.55px;color:#dcdcdc">        eventControl.checkEvent(event);</div>
<div class="code" style="left:24.399999999999977px;top:426.93px;width:16.29px;text-align:right;color:#2b91af">41</div>
<div class="code" style="left:85px;top:426.93px;color:#dcdcdc">    }</div>
<div class="code" style="left:24.399999999999977px;top:446.31px;width:16.29px;text-align:right;color:#2b91af">42</div>
<div class="code" style="left:24.399999999999977px;top:465.69px;width:16.29px;text-align:right;color:#2b91af">43</div>
<div class="code" style="left:24.399999999999977px;top:485.07px;width:16.29px;text-align:right;color:#2b91af">44</div>
<div class="code" style="left:85px;top:485.07px;color:#dcdcdc">    <span style="color:#569cd6">return</span> <span style="color:#b5cea8">0</span>;</div>
<div class="code" style="left:24.399999999999977px;top:504.45px;width:16.29px;text-align:right;color:#2b91af">45</div>
<div class="code" style="left:85px;top:504.45px;color:#dcdcdc">}</div>
<div class="code" style="left:24.399999999999977px;top:523.83px;width:16.29px;text-align:right;color:#2b91af">46</div>
</div>
<div class="r" style="left:1317px;top:128px;width:18px;height:546px;background:#3e3e42;"></div>
<div class="r" style="left:1318px;top:128px;width:16px;height:16px;background:#1a1a1a;"></div>
<svg class="s" style="left:1318px;top:128px;" width="16" height="16" viewBox="0 0 16 16"><path d="M2 7.5H13.5M2 9.5H13.5" stroke="#f4f4f4" stroke-width="1.1"/><path d="M7.75 2.5V7M7.75 10V14" stroke="#f4f4f4" stroke-width="1.2"/><path d="M5.3 4.3L7.75 1.6L10.2 4.3ZM5.3 12.2L7.75 14.9L10.2 12.2Z" fill="#f4f4f4"/></svg>
<svg class="s" style="left:1321px;top:150px;" width="10" height="6" viewBox="0 0 10 6"><path d="M0 6L5 0.5L10 6Z" fill="#999"/></svg>
<div class="r" style="left:1321px;top:278px;width:9px;height:183px;background:#686868;"></div>
<div class="r" style="left:1317px;top:440px;width:17px;height:2px;background:#e0e0e0;"></div>
<svg class="s" style="left:1321px;top:645px;" width="10" height="5" viewBox="0 0 10 5"><path d="M0 0L5 5L10 0Z" fill="#999"/></svg>
<div class="r" style="left:235px;top:656px;width:1082px;height:17px;background:#3e3e42;"></div>
<div class="r" style="left:236px;top:657px;width:58px;height:15px;background:#333337;"></div>
<div class="t" style="left:238.30px;top:656.99px;font-size:11px;color:#f1f1f1;">114 %</div>
<svg class="s" style="left:286px;top:663px;" width="6" height="3" viewBox="0 0 6 3"><path d="M0 0H6L3 3Z" fill="#f1f1f1"/></svg>
<svg class="s" style="left:300px;top:660px;" width="6" height="9" viewBox="0 0 6 9"><path d="M6 0V9L0 4.5Z" fill="#999"/></svg>
<div class="r" style="left:312px;top:660px;width:693px;height:9px;background:#686868;"></div>
<svg class="s" style="left:1306px;top:660px;" width="6" height="9" viewBox="0 0 6 9"><path d="M0 0V9L6 4.5Z" fill="#999"/></svg>
<div class="r" style="left:1360px;top:85px;width:6px;height:77px;background:#3f3f46;"></div>
<div class="t" style="left:1341px;top:85.4px;font-size:12px;color:#d0d0d0;writing-mode:vertical-rl;line-height:16px;letter-spacing:-0.38px;">Server Explorer</div>
<div class="r" style="left:1360px;top:174px;width:6px;height:43px;background:#3f3f46;"></div>
<div class="t" style="left:1341px;top:173.9px;font-size:12px;color:#d0d0d0;writing-mode:vertical-rl;line-height:16px;letter-spacing:0.35px;">Toolbox</div>
<div class="r" style="left:1360px;top:228px;width:6px;height:54px;background:#3f3f46;"></div>
<div class="t" style="left:1341px;top:229.4px;font-size:12px;color:#d0d0d0;writing-mode:vertical-rl;line-height:16px;letter-spacing:0px;">Properties</div>
<div class="r" style="left:1360px;top:292px;width:6px;height:90px;background:#3f3f46;"></div>
<div class="t" style="left:1341px;top:293.9px;font-size:12px;color:#d0d0d0;writing-mode:vertical-rl;line-height:16px;letter-spacing:0px;">Diagnostic Tools</div>
<div class="t" style="left:6.60px;top:680.04px;font-size:12px;color:#d0d0d0;">Output</div>
<div class="t" style="left:56.20px;top:680.04px;font-size:12px;color:#d0d0d0;">Error List</div>
<div class="r" style="left:6px;top:699px;width:38px;height:6px;background:#3f3f46;"></div>
<div class="r" style="left:56px;top:699px;width:46px;height:6px;background:#3f3f46;"></div>
<div class="r" style="left:0px;top:705px;width:1366px;height:21px;background:#007acc;"></div>
<div class="t" style="left:4.70px;top:708.54px;font-size:12px;color:#ffffff;letter-spacing:-0.75px;">Ready</div>
<div class="t" style="left:606.00px;top:708.54px;font-size:12px;color:#ffffff;word-spacing:-1.8px;">Ln 44</div>
<div class="t" style="left:698.60px;top:708.54px;font-size:12px;color:#ffffff;word-spacing:-2.2px;">Col 14</div>
<div class="t" style="left:790.50px;top:708.54px;font-size:12px;color:#ffffff;word-spacing:-1.2px;">Ch 11</div>
<div class="t" style="left:925.80px;top:708.54px;font-size:12px;color:#ffffff;">INS</div>
<svg class="s" style="left:1073px;top:711px;" width="10" height="12" viewBox="0 0 10 12"><path d="M5 2.2V11.5M1.3 5.8L5 2.1L8.7 5.8" stroke="#f0f0f0" stroke-width="1.9" fill="none"/></svg>
<div class="t" style="left:1091.00px;top:708.54px;font-size:12px;color:#ffffff;">0</div>
<svg class="s" style="left:1122px;top:710px;" width="13" height="13" viewBox="0 0 13 13"><path d="M1 12L1.8 9.2L9.3 1.7L11.3 3.7L3.8 11.2Z" fill="#e8e8e8"/><path d="M2.3 8.7L4.3 10.7" stroke="#007acc" stroke-width="0.8"/></svg>
<div class="t" style="left:1141.00px;top:708.54px;font-size:12px;color:#ffffff;">0</div>
<svg class="s" style="left:1170px;top:709px;" width="14" height="14" viewBox="0 0 14 14"><path d="M7 0.5L13.5 7L7 13.5L0.5 7Z" fill="#fff"/><circle cx="5.5" cy="5" r="1.2" fill="#007acc"/><circle cx="8.5" cy="9" r="1.2" fill="#007acc"/><path d="M5.5 5L8.5 9" stroke="#007acc" stroke-width="1"/></svg>
<div class="t" style="left:1192.50px;top:708.54px;font-size:12px;color:#ffffff;">MV-Engine</div>
<svg class="s" style="left:1273px;top:710px;" width="15" height="13" viewBox="0 0 15 13"><path d="M2.5 2.5L7.5 8.5M12.5 2.5L7.5 8.5M7.5 8V12.5" stroke="#e8e8e8" stroke-width="2.2" fill="none"/><path d="M0.5 1.5H4.5M0.5 0.5V4.5M10.5 1.5H14.5M14.5 0.5V4.5" stroke="#e8e8e8" stroke-width="1.6"/></svg>
<div class="t" style="left:1296.00px;top:708.54px;font-size:12px;color:#ffffff;">master</div>
<svg class="s" style="left:1338px;top:715px;" width="7" height="4" viewBox="0 0 7 4"><path d="M0 4L3.5 0.3L7 4Z" fill="#fff"/></svg>
</body></html>
